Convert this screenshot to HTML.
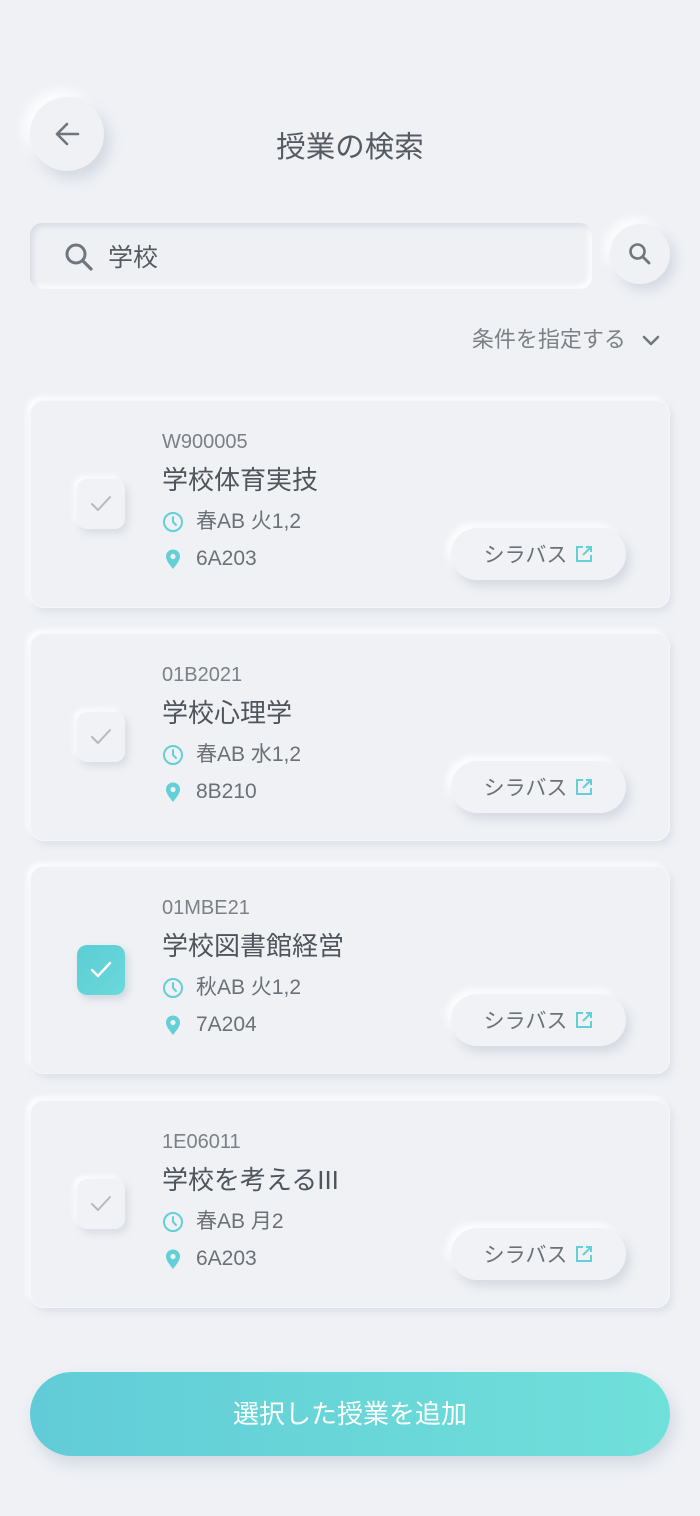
<!DOCTYPE html>
<html><head><meta charset="utf-8"><style>
*{margin:0;padding:0;box-sizing:border-box}
body{width:700px;height:1516px;background:#eff1f5;font-family:"Liberation Sans","Noto Sans CJK JP",sans-serif;position:relative;overflow:hidden;color:#555b63}
.abs{position:absolute}
.back{left:30px;top:97px;width:74px;height:74px;border-radius:50%;background:#eff1f5;box-shadow:6px 8px 14px #d3d8e2,-6px -6px 12px #ffffff}
.title{left:0;width:700px;top:128px;text-align:center;font-size:29.5px;color:#555b63;line-height:40px}
.search{left:30px;top:223px;width:562px;height:66px;border-radius:12px;background:#eef0f4;box-shadow:inset 3px 3px 6px #d8dce4,inset -3px -3px 6px #ffffff}
.sbtn{left:610px;top:224px;width:60px;height:60px;border-radius:50%;background:#eff1f5;box-shadow:5px 6px 12px #d3d8e2,-5px -5px 10px #fff}
.cond{right:40px;top:324px;font-size:22px;color:#7b8187;line-height:32px}
.card{left:30px;width:640px;height:208px;border-radius:14px;background:#eff1f4;box-shadow:3px 4px 8px #dde1e8,-3px -3px 6px #fff;border:1px solid #f6f7f9}
.chk{left:46px;top:78px;width:48px;height:50px;border-radius:10px;background:#f1f2f5;box-shadow:3px 4px 8px #d7dbe3,-3px -3px 6px #fff}
.chk.on{background:linear-gradient(135deg,#5ccdd5,#6ad9da);box-shadow:3px 4px 8px #cfd7df}
.code{left:131px;top:28px;font-size:20px;color:#7b8187;line-height:26px}
.name{left:131px;top:62px;font-size:26px;color:#4f555d;line-height:34px}
.row{left:131px;font-size:21px;color:#6b7178;line-height:28px;display:flex;align-items:center}
.row svg{margin-right:12px}
.syl{left:420px;top:127px;width:175px;height:52px;border-radius:26px;background:#f1f2f5;box-shadow:4px 6px 10px #d5d9e1,-4px -4px 8px #fff;font-size:21px;color:#6b7178;display:flex;align-items:center;justify-content:center;gap:8px}
.add{left:30px;top:1372px;width:640px;height:84px;border-radius:42px;background:linear-gradient(90deg,#61ccd7,#70e0da);box-shadow:4px 8px 16px #d2d8e0;color:#fff;font-size:26px;text-align:center;line-height:84px}
</style></head><body>
<div class="abs back"><svg class="abs" style="left:22px;top:22px" width="30" height="30" viewBox="0 0 30 30"><path d="M26 15H5M15 5L5 15l10 10" fill="none" stroke="#6f767c" stroke-width="2.6" stroke-linecap="round" stroke-linejoin="round"/></svg></div>
<div class="abs title">授業の検索</div>
<div class="abs search">
<svg class="abs" style="left:33px;top:18px" width="32" height="32" viewBox="0 0 32 32"><circle cx="13" cy="13" r="9" fill="none" stroke="#6f767c" stroke-width="3"/><path d="M20 20l8 8" stroke="#6f767c" stroke-width="3.2" stroke-linecap="round"/></svg>
<div class="abs" style="left:78px;top:18px;font-size:25px;color:#555b63;line-height:34px">学校</div>
</div>
<div class="abs sbtn"><svg class="abs" style="left:17px;top:17px" width="26" height="26" viewBox="0 0 26 26"><circle cx="10.5" cy="10.5" r="7" fill="none" stroke="#6f767c" stroke-width="2.6"/><path d="M16 16l6 6" stroke="#6f767c" stroke-width="2.8" stroke-linecap="round"/></svg></div>
<div class="abs cond">条件を指定する <svg style="margin-left:10px;vertical-align:-1px" width="18" height="14" viewBox="0 0 18 14"><path d="M2 3l7 7 7-7" fill="none" stroke="#6f767c" stroke-width="2.6" stroke-linecap="round" stroke-linejoin="round"/></svg></div>

<div class="abs card" style="top:400px">
<div class="abs chk"><svg class="abs" style="left:12px;top:13px" width="24" height="24" viewBox="0 0 24 24"><path d="M3 12l6 6L21 5" fill="none" stroke="#b5b9be" stroke-width="2" stroke-linecap="round" stroke-linejoin="round"/></svg></div>
<div class="abs code">W900005</div><div class="abs name">学校体育実技</div>
<div class="abs row" style="top:107px"><svg width="22" height="22" viewBox="0 0 22 22"><circle cx="11" cy="11" r="9" fill="none" stroke="#63cfd6" stroke-width="2"/><path d="M11 6v5l3 3" fill="none" stroke="#63cfd6" stroke-width="2" stroke-linecap="round"/></svg>春AB 火1,2</div>
<div class="abs row" style="top:144px"><svg width="22" height="24" viewBox="0 0 22 24"><path d="M11 22C7 17 4 13 4 9.5a7 7 0 0114 0C18 13 15 17 11 22z" fill="#63cfd6"/><circle cx="11" cy="9.5" r="2.6" fill="#eff1f4"/></svg>6A203</div>
<div class="abs syl">シラバス<svg width="18" height="18" viewBox="0 0 18 18"><path d="M8 2H2v14h14v-6M11 2h5v5M16 2L8 10" fill="none" stroke="#63cfd6" stroke-width="2"/></svg></div>
</div>

<div class="abs card" style="top:633px">
<div class="abs chk"><svg class="abs" style="left:12px;top:13px" width="24" height="24" viewBox="0 0 24 24"><path d="M3 12l6 6L21 5" fill="none" stroke="#b5b9be" stroke-width="2" stroke-linecap="round" stroke-linejoin="round"/></svg></div>
<div class="abs code">01B2021</div><div class="abs name">学校心理学</div>
<div class="abs row" style="top:107px"><svg width="22" height="22" viewBox="0 0 22 22"><circle cx="11" cy="11" r="9" fill="none" stroke="#63cfd6" stroke-width="2"/><path d="M11 6v5l3 3" fill="none" stroke="#63cfd6" stroke-width="2" stroke-linecap="round"/></svg>春AB 水1,2</div>
<div class="abs row" style="top:144px"><svg width="22" height="24" viewBox="0 0 22 24"><path d="M11 22C7 17 4 13 4 9.5a7 7 0 0114 0C18 13 15 17 11 22z" fill="#63cfd6"/><circle cx="11" cy="9.5" r="2.6" fill="#eff1f4"/></svg>8B210</div>
<div class="abs syl">シラバス<svg width="18" height="18" viewBox="0 0 18 18"><path d="M8 2H2v14h14v-6M11 2h5v5M16 2L8 10" fill="none" stroke="#63cfd6" stroke-width="2"/></svg></div>
</div>

<div class="abs card" style="top:866px">
<div class="abs chk on"><svg class="abs" style="left:12px;top:13px" width="24" height="24" viewBox="0 0 24 24"><path d="M3 12l6 6L21 5" fill="none" stroke="#ffffff" stroke-width="2.4" stroke-linecap="round" stroke-linejoin="round"/></svg></div>
<div class="abs code">01MBE21</div><div class="abs name">学校図書館経営</div>
<div class="abs row" style="top:107px"><svg width="22" height="22" viewBox="0 0 22 22"><circle cx="11" cy="11" r="9" fill="none" stroke="#63cfd6" stroke-width="2"/><path d="M11 6v5l3 3" fill="none" stroke="#63cfd6" stroke-width="2" stroke-linecap="round"/></svg>秋AB 火1,2</div>
<div class="abs row" style="top:144px"><svg width="22" height="24" viewBox="0 0 22 24"><path d="M11 22C7 17 4 13 4 9.5a7 7 0 0114 0C18 13 15 17 11 22z" fill="#63cfd6"/><circle cx="11" cy="9.5" r="2.6" fill="#eff1f4"/></svg>7A204</div>
<div class="abs syl">シラバス<svg width="18" height="18" viewBox="0 0 18 18"><path d="M8 2H2v14h14v-6M11 2h5v5M16 2L8 10" fill="none" stroke="#63cfd6" stroke-width="2"/></svg></div>
</div>

<div class="abs card" style="top:1100px">
<div class="abs chk"><svg class="abs" style="left:12px;top:13px" width="24" height="24" viewBox="0 0 24 24"><path d="M3 12l6 6L21 5" fill="none" stroke="#b5b9be" stroke-width="2" stroke-linecap="round" stroke-linejoin="round"/></svg></div>
<div class="abs code">1E06011</div><div class="abs name">学校を考えるIII</div>
<div class="abs row" style="top:107px"><svg width="22" height="22" viewBox="0 0 22 22"><circle cx="11" cy="11" r="9" fill="none" stroke="#63cfd6" stroke-width="2"/><path d="M11 6v5l3 3" fill="none" stroke="#63cfd6" stroke-width="2" stroke-linecap="round"/></svg>春AB 月2</div>
<div class="abs row" style="top:144px"><svg width="22" height="24" viewBox="0 0 22 24"><path d="M11 22C7 17 4 13 4 9.5a7 7 0 0114 0C18 13 15 17 11 22z" fill="#63cfd6"/><circle cx="11" cy="9.5" r="2.6" fill="#eff1f4"/></svg>6A203</div>
<div class="abs syl">シラバス<svg width="18" height="18" viewBox="0 0 18 18"><path d="M8 2H2v14h14v-6M11 2h5v5M16 2L8 10" fill="none" stroke="#63cfd6" stroke-width="2"/></svg></div>
</div>

<div class="abs add">選択した授業を追加</div>
</body></html>
